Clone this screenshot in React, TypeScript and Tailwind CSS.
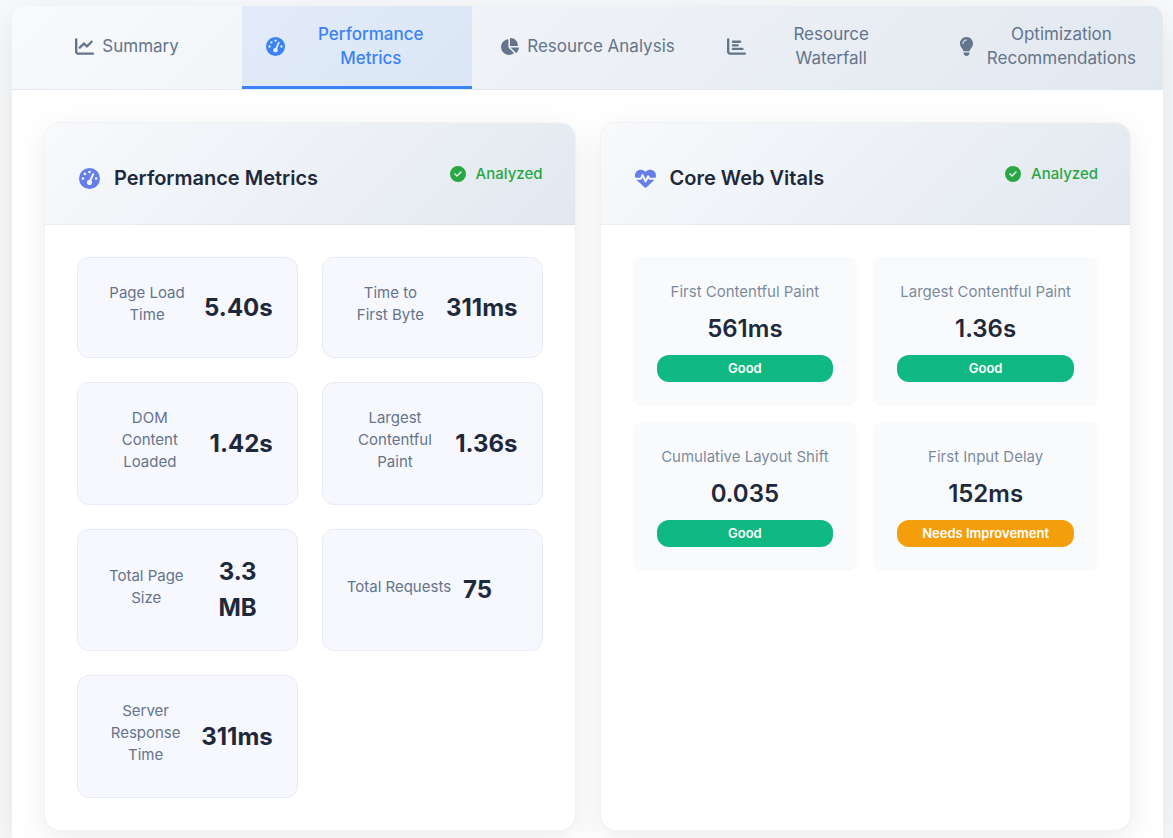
import type { ReactNode } from 'react'
import clsx from 'clsx'
import type { IconType } from 'react-icons'
import {
  FaChartBar,
  FaChartLine,
  FaChartPie,
  FaCircleCheck,
  FaGaugeHigh,
  FaHeartPulse,
  FaLightbulb,
} from 'react-icons/fa6'

const tabs = [
  { label: 'Summary', icon: FaChartLine },
  { label: 'Performance\nMetrics', icon: FaGaugeHigh, active: true, wrap: true },
  { label: 'Resource Analysis', icon: FaChartPie },
  { label: 'Resource\nWaterfall', icon: FaChartBar, wrap: true },
  { label: 'Optimization\nRecommendations', icon: FaLightbulb, wrap: true },
]

const metrics = [
  { label: 'Page Load\nTime', value: '5.40s' },
  { label: 'Time to\nFirst Byte', value: '311ms' },
  { label: 'DOM\nContent\nLoaded', value: '1.42s' },
  { label: 'Largest\nContentful\nPaint', value: '1.36s' },
  { label: 'Total Page\nSize', value: '3.3\nMB' },
  { label: 'Total Requests', value: '75' },
  { label: 'Server\nResponse\nTime', value: '311ms' },
]

const vitals = [
  { label: 'First Contentful Paint', value: '561ms', rating: 'Good' },
  { label: 'Largest Contentful Paint', value: '1.36s', rating: 'Good' },
  { label: 'Cumulative Layout Shift', value: '0.035', rating: 'Good' },
  { label: 'First Input Delay', value: '152ms', rating: 'Needs Improvement' },
]

function Tabs() {
  return (
    <nav
      role="tablist"
      className="grid grid-cols-5 overflow-hidden rounded-t-xl border-b border-slate-200 bg-[linear-gradient(135deg,#f8fafc_0%,#e2e8f0_100%)]"
    >
      {tabs.map(({ label, icon: Icon, active, wrap }) => (
        <button
          key={label}
          type="button"
          role="tab"
          aria-selected={Boolean(active)}
          className={clsx(
            'flex items-center justify-center gap-2 border-b-3 px-6 py-4 text-[17px] leading-6',
            active
              ? 'border-[#3b82f6] bg-[#3b82f6]/10 font-medium text-[#3b82f6]'
              : 'border-transparent text-[#64748b]'
          )}
        >
          <Icon className="size-[19px] shrink-0" />
          <span className={clsx('whitespace-pre-line', wrap && 'grow')}>{label}</span>
        </button>
      ))}
    </nav>
  )
}

function Panel({ title, icon: Icon, children }: { title: string; icon: IconType; children: ReactNode }) {
  return (
    <section className="overflow-hidden rounded-2xl border border-black/5 bg-white shadow-[0_8px_32px_rgba(0,0,0,0.08)]">
      <header className="flex items-center justify-between border-b border-black/5 bg-[linear-gradient(135deg,#f8fafc_0%,#e2e8f0_100%)] px-8 py-8">
        <h2 className="flex items-center gap-3 pt-[9px] text-[20px] leading-7 font-semibold text-[#1e293b]">
          <Icon className="mx-0.5 size-[21px] text-[#667eea]" />
          {title}
        </h2>
        <span className="flex items-center gap-2.5 text-[15px] leading-5 font-medium text-[#28a745]">
          <FaCircleCheck className="size-4" />
          Analyzed
        </span>
      </header>
      <div className="p-8">{children}</div>
    </section>
  )
}

export default function App() {
  return (
    <div className="flex min-h-screen flex-col bg-[#f8fafc] pt-1.5 pr-2.5 pl-3 font-['Inter',sans-serif]">
      <main className="grow rounded-t-xl bg-white shadow-[0_10px_40px_rgba(0,0,0,0.1)]">
        <Tabs />
        <div className="grid grid-cols-2 gap-6 px-8 pt-8 pb-2">
          <Panel title="Performance Metrics" icon={FaGaugeHigh}>
            <div className="grid grid-cols-2 gap-6">
              {metrics.map((metric) => (
                <div
                  key={metric.label}
                  className="flex items-center gap-3 rounded-xl border border-[#e8eafc] bg-[#f7f8fe] p-6 text-center"
                >
                  <div
                    className={clsx(
                      'mb-[7px] text-[15px] leading-[22px] whitespace-pre-line text-[#64748b]',
                      metric.label.includes('\n') && 'grow'
                    )}
                  >
                    {metric.label}
                  </div>
                  <div
                    className={clsx(
                      'text-2xl leading-9 font-bold whitespace-pre-line text-[#1e293b]',
                      metric.value.includes('\n') && 'px-4'
                    )}
                  >
                    {metric.value}
                  </div>
                </div>
              ))}
            </div>
          </Panel>

          <Panel title="Core Web Vitals" icon={FaHeartPulse}>
            <div className="grid grid-cols-2 gap-4">
              {vitals.map((vital) => (
                <div key={vital.label} className="rounded-lg bg-[#f8fafc] p-6 text-center">
                  <div className="mb-2 text-[15px] leading-[22px] whitespace-nowrap text-[#64748b]/85">
                    {vital.label}
                  </div>
                  <div className="mb-2 text-2xl leading-9 font-semibold text-[#1e293b]">{vital.value}</div>
                  <div
                    className={clsx(
                      'rounded-xl py-1 text-[13px] leading-[19px] font-semibold text-white',
                      vital.rating === 'Good' ? 'bg-[#10b981]' : 'bg-[#f59e0b]'
                    )}
                  >
                    {vital.rating}
                  </div>
                </div>
              ))}
            </div>
          </Panel>
        </div>
      </main>
    </div>
  )
}
